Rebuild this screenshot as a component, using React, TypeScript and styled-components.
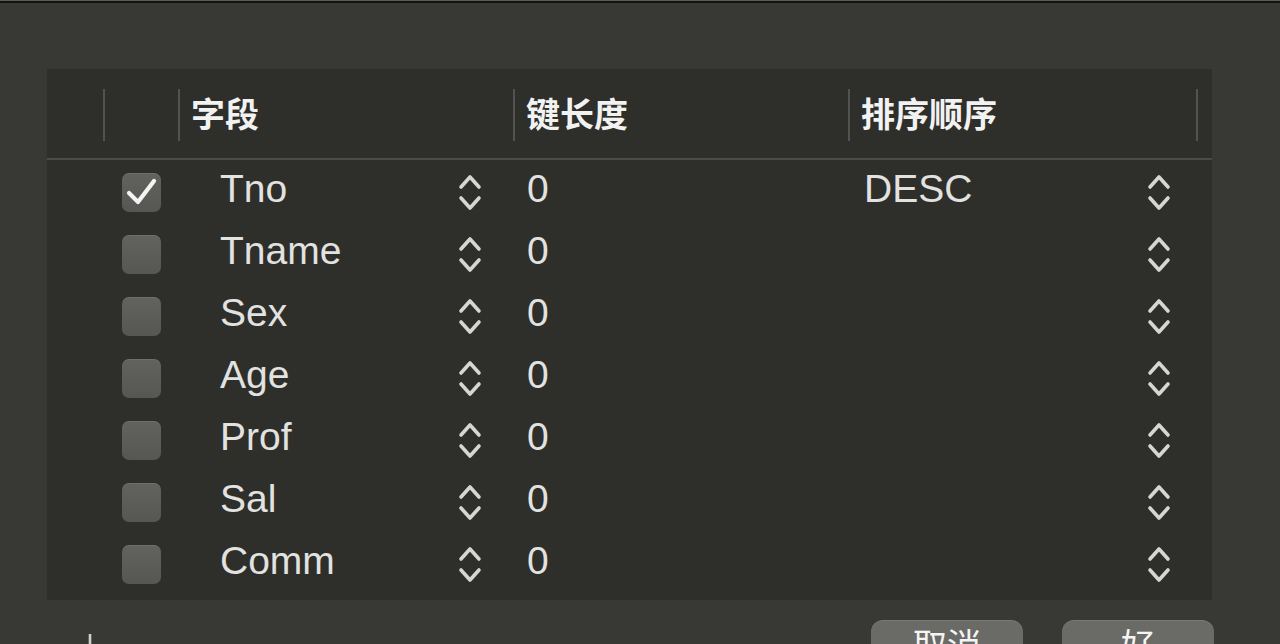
import styled, { createGlobalStyle } from "styled-components";

type Field = {
  name: string;
  checked: boolean;
  length: string;
  order: string;
};

const fields: Field[] = [
  { name: "Tno", checked: true, length: "0", order: "DESC" },
  { name: "Tname", checked: false, length: "0", order: "" },
  { name: "Sex", checked: false, length: "0", order: "" },
  { name: "Age", checked: false, length: "0", order: "" },
  { name: "Prof", checked: false, length: "0", order: "" },
  { name: "Sal", checked: false, length: "0", order: "" },
  { name: "Comm", checked: false, length: "0", order: "" },
];

const Stepper = () => (
  <StepperIcon viewBox="0 0 26 40" width="26" height="40">
    <path d="M4 14 L13 4 L22 14" />
    <path d="M4 25 L13 35 L22 25" />
  </StepperIcon>
);

const Check = () => (
  <svg viewBox="0 0 39 39" width="39" height="39">
    <path
      d="M7 20 L16 29 L32 8"
      fill="none"
      stroke="#f4f4f4"
      strokeWidth="4.2"
      strokeLinecap="round"
      strokeLinejoin="round"
    />
  </svg>
);

const App = () => {
  return (
    <>
      <GlobalStyle />
      <Window>
        <Panel>
          <HeaderRow>
            <span />
            <HeaderCell />
            <HeaderCell>字段</HeaderCell>
            <HeaderCell>键长度</HeaderCell>
            <HeaderCell $last>排序顺序</HeaderCell>
          </HeaderRow>
          <Body>
            {fields.map((f) => (
              <Row key={f.name}>
                <span />
                <CheckCell>
                  <CheckBox>{f.checked && <Check />}</CheckBox>
                </CheckCell>
                <SelectCell $pad={41} $right={31}>
                  <Value>{f.name}</Value>
                  <Stepper />
                </SelectCell>
                <SelectCell $pad={13} $right={0}>
                  <Value>{f.length}</Value>
                </SelectCell>
                <SelectCell $pad={15} $right={25}>
                  <Value>{f.order}</Value>
                  <Stepper />
                </SelectCell>
              </Row>
            ))}
          </Body>
        </Panel>
        <Footer>
          <PlusIcon viewBox="0 0 30 30" width="30" height="30">
            <path d="M15 2 V28 M2 15 H28" />
          </PlusIcon>
          <Buttons>
            <Button>取消</Button>
            <Button>好</Button>
          </Buttons>
        </Footer>
      </Window>
    </>
  );
};

export default App;

const GlobalStyle = createGlobalStyle`
  html, body {
    margin: 0;
    padding: 0;
    background: #383834;
    overflow: hidden;
  }
  body {
    font-family: "Liberation Sans", "Noto Sans CJK SC", sans-serif;
  }
`;

const Window = styled.div`
  width: 1280px;
  height: 644px;
  box-sizing: border-box;
  border-top: 1px solid #5a5a58;
  box-shadow: inset 0 2px 0 #121212;
  padding-top: 68px;
  overflow: hidden;
  background: #383834;
`;

const Panel = styled.div`
  margin-left: 47px;
  width: 1165px;
  height: 531px;
  background: #2e2e2a;
  display: flex;
  flex-direction: column;
`;

const columns = "57px 75px 335px 335px 348px 1fr";

const HeaderRow = styled.div`
  display: grid;
  grid-template-columns: ${columns};
  height: 89px;
  border-bottom: 2px solid #4b4b47;
`;

const HeaderCell = styled.div<{ $last?: boolean }>`
  position: relative;
  display: flex;
  align-items: center;
  padding-left: 12px;
  padding-bottom: 2px;
  font-family: "Noto Sans CJK SC", sans-serif;
  font-weight: 700;
  font-size: 34px;
  color: #f2f2f2;

  &::before {
    content: "";
    position: absolute;
    left: -1px;
    top: 20px;
    width: 2px;
    height: 52px;
    background: #52524e;
  }

  ${(p) =>
    p.$last &&
    `
    &::after {
      content: "";
      position: absolute;
      right: -1px;
      top: 20px;
      width: 2px;
      height: 52px;
      background: #52524e;
    }
  `}
`;

const Body = styled.div`
  display: flex;
  flex-direction: column;
`;

const Row = styled.div`
  display: grid;
  grid-template-columns: ${columns};
  height: 62px;
`;

const CheckCell = styled.div`
  display: flex;
  align-items: center;
  justify-content: center;
  padding-top: 2px;
`;

const CheckBox = styled.div`
  width: 39px;
  height: 39px;
  border-radius: 7px;
  background: linear-gradient(#62625f, #565653);
  box-shadow: inset 0 1px 0 rgba(255, 255, 255, 0.08);
`;

const SelectCell = styled.div<{ $pad: number; $right: number }>`
  display: flex;
  align-items: center;
  justify-content: space-between;
  padding-left: ${(p) => p.$pad}px;
  padding-right: ${(p) => p.$right}px;
`;

const Value = styled.span`
  font-size: 39px;
  color: #e2e2e0;
  margin-top: -4px;
`;

const StepperIcon = styled.svg`
  fill: none;
  stroke: #d6d6d4;
  stroke-width: 3.6;
  stroke-linecap: round;
  stroke-linejoin: round;
  margin-top: 4px;
`;

const Footer = styled.div`
  display: flex;
  justify-content: space-between;
  padding: 20px 66px 0 75px;
`;

const PlusIcon = styled.svg`
  fill: none;
  stroke: #d0d0ce;
  stroke-width: 2.6;
  margin-top: 12px;
`;

const Buttons = styled.div`
  display: flex;
  gap: 39px;
`;

const Button = styled.div`
  width: 152px;
  height: 50px;
  border-radius: 12px;
  background: #6a6a66;
  box-shadow: inset 0 1px 0 rgba(255, 255, 255, 0.1);
  display: flex;
  justify-content: center;
  padding-top: 4px;
  box-sizing: border-box;
  font-family: "Noto Sans CJK SC", sans-serif;
  font-size: 34px;
  line-height: 1.2;
  color: #f4f4f4;
`;
